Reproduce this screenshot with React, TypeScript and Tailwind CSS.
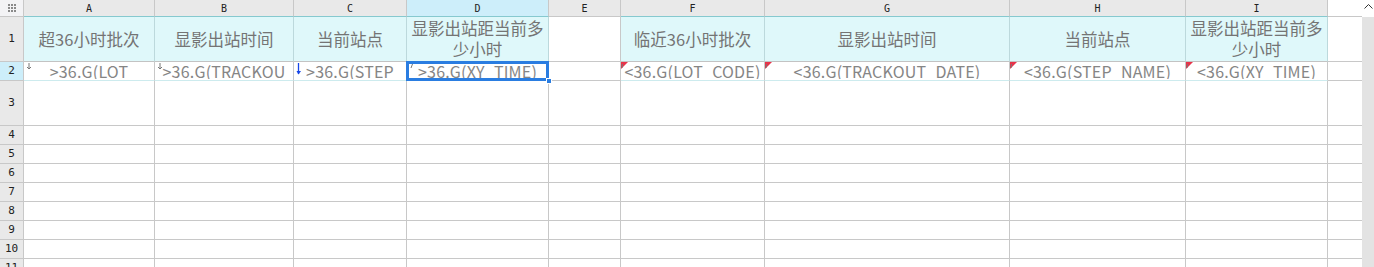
import React from "react";

const COLS = [
  { key: "A", w: 131, fill: true },
  { key: "B", w: 139, fill: true },
  { key: "C", w: 113, fill: true },
  { key: "D", w: 142, fill: true, sel: true },
  { key: "E", w: 72, fill: false },
  { key: "F", w: 144, fill: true },
  { key: "G", w: 245, fill: true },
  { key: "H", w: 176, fill: true },
  { key: "I", w: 142, fill: true },
];

const HEADERS = ["超36小时批次", "显影出站时间", "当前站点", "显影出站距当前多少小时", "", "临近36小时批次", "显影出站时间", "当前站点", "显影出站距当前多少小时"];
const DATA = [">36.G(LOT", ">36.G(TRACKOU", ">36.G(STEP", ">36.G(XY_TIME)", "", "<36.G(LOT_CODE)", "<36.G(TRACKOUT_DATE)", "<36.G(STEP_NAME)", "<36.G(XY_TIME)"];
// marker type for row 2
const MARKS = ["arrow", "arrow", "blue", "tick", "", "red", "red", "red", "red"];

const EMPTY_ROWS = [
  { n: 3, h: "h-[45px]" },
  { n: 4, h: "h-[19px]" },
  { n: 5, h: "h-[19px]" },
  { n: 6, h: "h-[19px]" },
  { n: 7, h: "h-[19px]" },
  { n: 8, h: "h-[19px]" },
  { n: 9, h: "h-[19px]" },
  { n: 10, h: "h-[19px]" },
  { n: 11, h: "h-[19px]" },
];

const cjk = "font-['Microsoft_YaHei','Noto_Sans_CJK_SC',sans-serif]";
const hdrFont = "font-['DejaVu_Sans_Mono',monospace]";

function Marker({ type }: { type: string }) {
  if (type === "arrow")
    return (
      <svg className="absolute left-[2px] top-[1px]" width="6" height="7" viewBox="0 0 6 7">
        <path d="M3 0v6M1 4l2 2 2-2" stroke="#777" strokeWidth="1" fill="none" />
      </svg>
    );
  if (type === "blue")
    return (
      <svg className="absolute left-[2px] top-[1px]" width="6" height="12" viewBox="0 0 6 12">
        <path d="M2.5 0v11" stroke="#1646e8" strokeWidth="1.3" fill="none" />
        <path d="M0.5 8l2 3.5 2.5-3.5z" fill="#1646e8" />
      </svg>
    );
  if (type === "tick")
    return (
      <svg className="absolute left-[3px] top-[2px]" width="4" height="5" viewBox="0 0 4 5">
        <path d="M2.5 0L1 4" stroke="#777" strokeWidth="1" fill="none" />
      </svg>
    );
  if (type === "red")
    return (
      <svg className="absolute left-0 top-0" width="7" height="7" viewBox="0 0 7 7">
        <path d="M0 0h7L0 7z" fill="#e8334a" />
        <path d="M1.5 2L1 6" stroke="#777" strokeWidth="1" fill="none" />
      </svg>
    );
  return null;
}

export default function App() {
  return (
    <div className={`flex h-[267px] w-[1374px] overflow-hidden bg-white ${cjk}`}>
      <div className="flex w-[1362px] flex-col">
        {/* column letters */}
        <div className="flex h-[17px] shrink-0">
          <div className="flex w-[24px] items-center justify-center border-r border-b border-[#c8c8c8] bg-[#f3f3f5]">
            <div className="grid grid-cols-3 gap-[1px]">
              {Array.from({ length: 9 }).map((_, i) => (
                <div key={i} className="h-[2px] w-[2px] bg-[#8a8a8a]" />
              ))}
            </div>
          </div>
          {COLS.map((c) => (
            <div
              key={c.key}
              style={{ width: c.w }}
              className={`flex items-center justify-center border-r border-b border-[#c8c8c8] text-[10px] text-[#222] ${hdrFont} ${c.sel ? "bg-[#cdeefa]" : "bg-[#e9e9e9]"} ${c.fill ? "border-b-[#86c9cf]" : ""}`}
            >
              {c.key}
            </div>
          ))}
          <div className="flex-1 border-b border-[#c8c8c8] bg-white" />
        </div>

        {/* row 1 */}
        <div className="flex h-[45px] shrink-0">
          <div className={`flex w-[24px] items-center justify-center border-r border-b border-[#c8c8c8] bg-[#e9e9e9] text-[11px] text-[#222] ${hdrFont}`}>1</div>
          {COLS.map((c, i) => (
            <div
              key={c.key}
              style={{ width: c.w }}
              className={`flex items-center justify-center border-r border-b text-center text-[16.5px] leading-[21px] text-[#747474] ${c.fill ? "border-r-[#bcd9dc] border-b-[#c3c3c3] bg-[#dff8fa]" : "border-[#c8c8c8]"}`}
            >
              <span className="px-[3px]">{HEADERS[i]}</span>
            </div>
          ))}
          <div className="flex-1 border-b border-[#c8c8c8]" />
        </div>

        {/* row 2 */}
        <div className="flex h-[19px] shrink-0">
          <div className={`flex w-[24px] items-center justify-center border-r border-b border-[#c8c8c8] bg-[#cdeefa] text-[11px] text-[#222] ${hdrFont}`}>2</div>
          {COLS.map((c, i) => (
            <div
              key={c.key}
              style={{ width: c.w }}
              className={`relative flex justify-center border-r border-b border-[#c8c8c8] ${c.fill ? "border-b-[#cdebee]" : ""}`}
            >
              <div className="h-[17px] w-full overflow-hidden text-center text-[16px] leading-[19px] tracking-[0.2px] whitespace-nowrap text-[#858585]">
                {DATA[i]}
              </div>
              <Marker type={MARKS[i]} />
              {c.sel && (
                <>
                  <div className="absolute inset-[-1px] border-[3px] border-[#2a7de1]" />
                  <div className="absolute right-[-4px] bottom-[-4px] z-10 h-[6px] w-[6px] border border-white bg-[#2a7de1]" />
                </>
              )}
            </div>
          ))}
          <div className="flex-1 border-b border-[#c8c8c8]" />
        </div>

        {EMPTY_ROWS.map((r) => (
          <div key={r.n} className={`flex shrink-0 ${r.h}`}>
            <div className={`flex w-[24px] items-center justify-center border-r border-b border-[#c8c8c8] bg-[#e9e9e9] text-[11px] text-[#222] ${hdrFont}`}>{r.n}</div>
            {COLS.map((c) => (
              <div key={c.key} style={{ width: c.w }} className="border-r border-b border-[#c8c8c8]" />
            ))}
            <div className="flex-1 border-b border-[#c8c8c8]" />
          </div>
        ))}
      </div>

      {/* vertical scrollbar */}
      <div className="flex w-[12px] flex-col">
        <div className="flex h-[17px] items-start justify-center bg-white pt-[3px]">
          <svg width="9" height="6" viewBox="0 0 9 6">
            <path d="M0.5 5.5L4.5 1.5L8.5 5.5" stroke="#333" strokeWidth="1" fill="none" />
          </svg>
        </div>
        <div className="flex-1 bg-[#e3e3e3]" />
      </div>
    </div>
  );
}
